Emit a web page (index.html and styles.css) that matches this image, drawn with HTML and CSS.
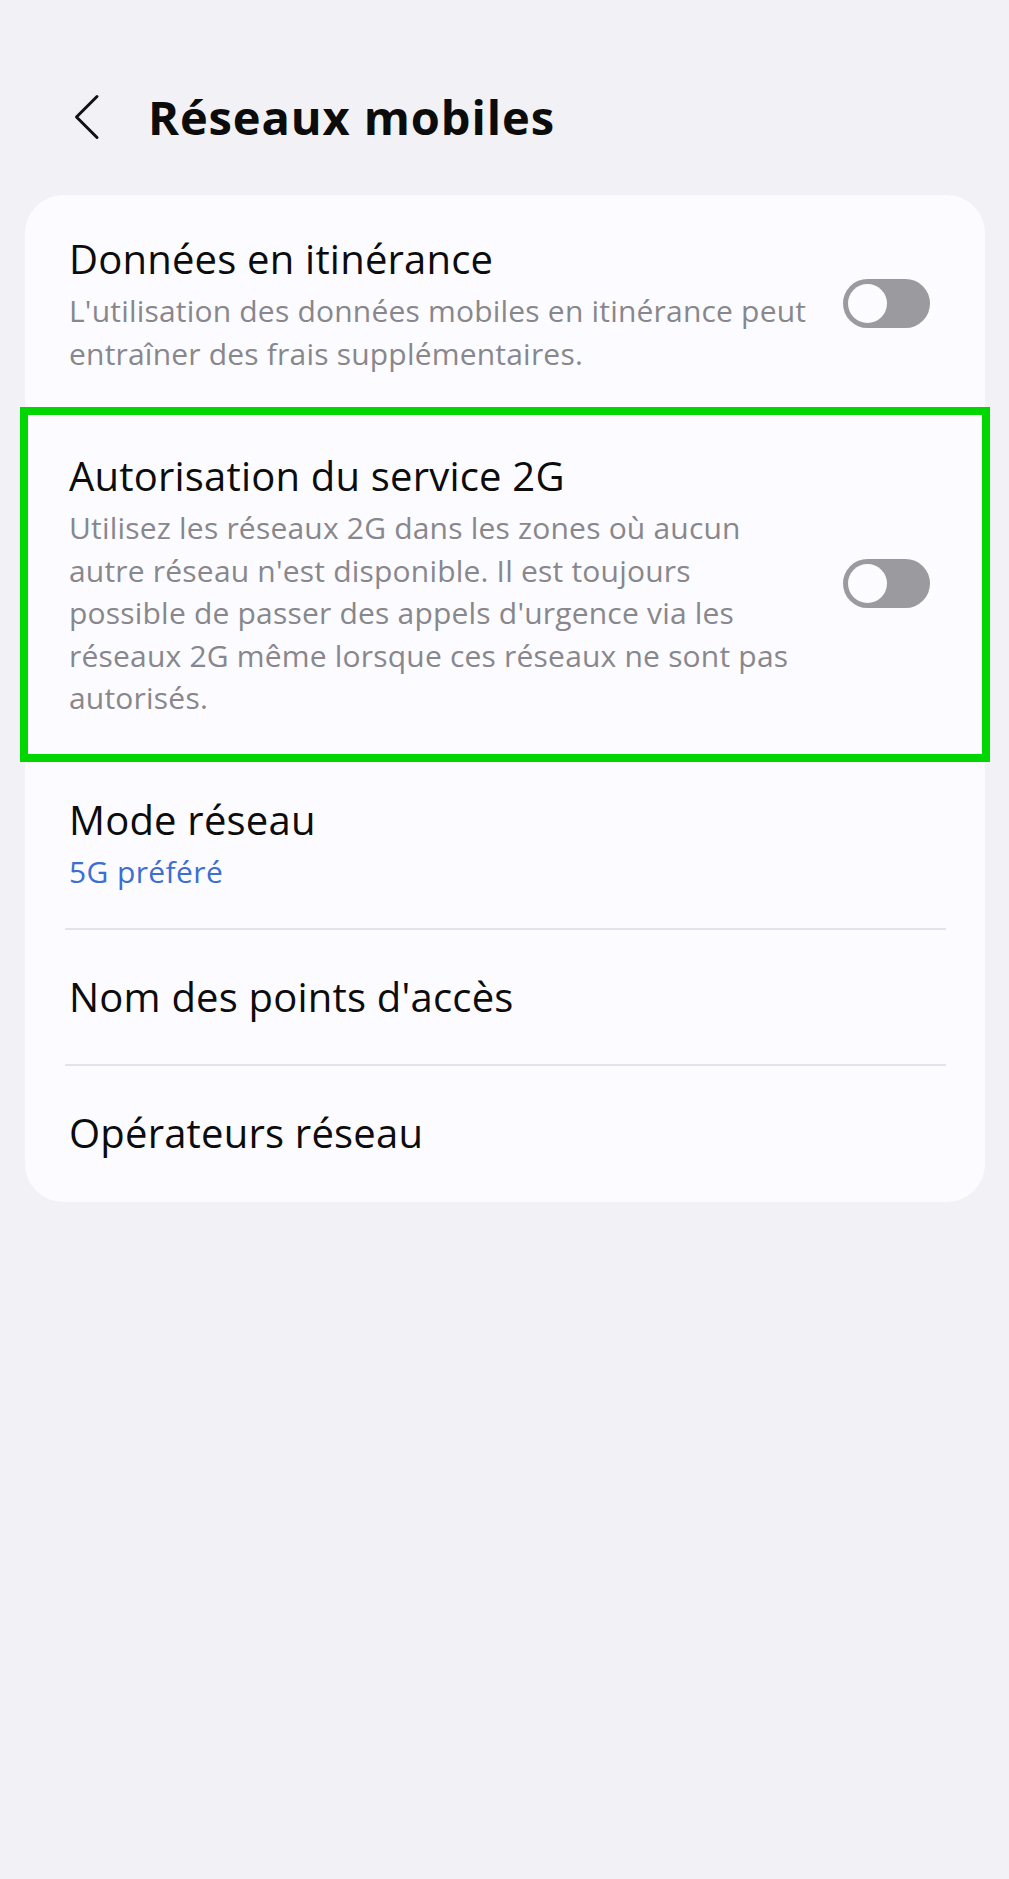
FILE: index.html
```html
<!DOCTYPE html>
<html lang="fr">
<head>
<meta charset="UTF-8">
<meta name="viewport" content="width=device-width, initial-scale=1.0">
<title>Réseaux mobiles</title>
<link rel="stylesheet" href="styles.css">
</head>
<body>
  <div class="screen">
    <div class="header">
      <a href="#" class="back">
        <svg width="26" height="48" viewBox="0 0 26 48">
          <polyline points="23,3.5 2.5,24 23,44.5" fill="none" stroke="#111" stroke-width="3" stroke-linecap="round" stroke-linejoin="round"/>
        </svg>
      </a>
      <h1 class="title">Réseaux mobiles</h1>
    </div>

    <div class="card">
      <div class="row row-toggle">
        <div class="text">
          <div class="label">Données en itinérance</div>
          <div class="desc">L'utilisation des données mobiles en itinérance peut<br>entraîner des frais supplémentaires.</div>
        </div>
        <div class="switch"><span class="knob"></span></div>
      </div>

      <div class="row row-toggle highlighted">
        <div class="text">
          <div class="label">Autorisation du service 2G</div>
          <div class="desc">Utilisez les réseaux 2G dans les zones où aucun<br>autre réseau n'est disponible. Il est toujours<br>possible de passer des appels d'urgence via les<br>réseaux 2G même lorsque ces réseaux ne sont pas<br>autorisés.</div>
        </div>
        <div class="switch"><span class="knob"></span></div>
      </div>

      <div class="row row-summary">
        <div class="text">
          <div class="label">Mode réseau</div>
          <div class="summary">5G préféré</div>
        </div>
      </div>
      <div class="divider"></div>

      <div class="row row-simple">
        <div class="label">Nom des points d'accès</div>
      </div>
      <div class="divider"></div>

      <div class="row row-simple last">
        <div class="label">Opérateurs réseau</div>
      </div>
    </div>
  </div>
</body>
</html>
```

FILE: styles.css
```css
body, html {
  margin: 0;
  padding: 0;
  background-color: #f2f1f6;
  font-family: "Open Sans", "Liberation Sans", sans-serif;
}

.screen {
  width: 1009px;
  min-height: 1879px;
  background-color: #f2f1f6;
}

.header {
  display: flex;
  align-items: center;
  height: 60px;
  padding: 87px 0 0 74px;
  margin-bottom: 48px;
}

.back {
  display: flex;
  width: 26px;
  height: 48px;
}

.title {
  margin: 0 0 0 48px;
  font-size: 47px;
  font-weight: 700;
  line-height: 60px;
  color: #0c0c0c;
  letter-spacing: 0.9px;
}

.card {
  margin: 0 24px 0 25px;
  background-color: #fcfbff;
  border-radius: 38px;
}

.row {
  display: flex;
  align-items: center;
  padding: 0 55px 0 44px;
}

.row-toggle {
  padding-top: 36px;
  padding-bottom: 37px;
}

.row-summary {
  padding-top: 35px;
  padding-bottom: 35px;
}

.row-simple {
  padding-top: 39px;
  padding-bottom: 39px;
}

.row-simple.last {
  padding-bottom: 41px;
}

.highlighted {
  outline: 8px solid #00d600;
  outline-offset: -3px;
}

.text {
  flex: 1;
}

.label {
  font-size: 40px;
  line-height: 56px;
  color: #0c0c0c;
  letter-spacing: 0.2px;
}

.desc {
  margin-top: 3px;
  font-size: 30px;
  line-height: 42.5px;
  color: #88878c;
  white-space: nowrap;
  letter-spacing: 0.2px;
}

.summary {
  margin-top: 3px;
  font-size: 30px;
  line-height: 42.5px;
  color: #3c6fd0;
  letter-spacing: 0.4px;
}

.switch {
  position: relative;
  flex-shrink: 0;
  width: 87px;
  height: 49px;
  border-radius: 25px;
  background-color: #9b9a9f;
}

.knob {
  position: absolute;
  left: 5px;
  top: 5px;
  width: 39px;
  height: 39px;
  border-radius: 50%;
  background-color: #fcfbff;
}

.divider {
  height: 2px;
  margin: 0 39px 0 40px;
  background-color: #e4e3e8;
}
```
